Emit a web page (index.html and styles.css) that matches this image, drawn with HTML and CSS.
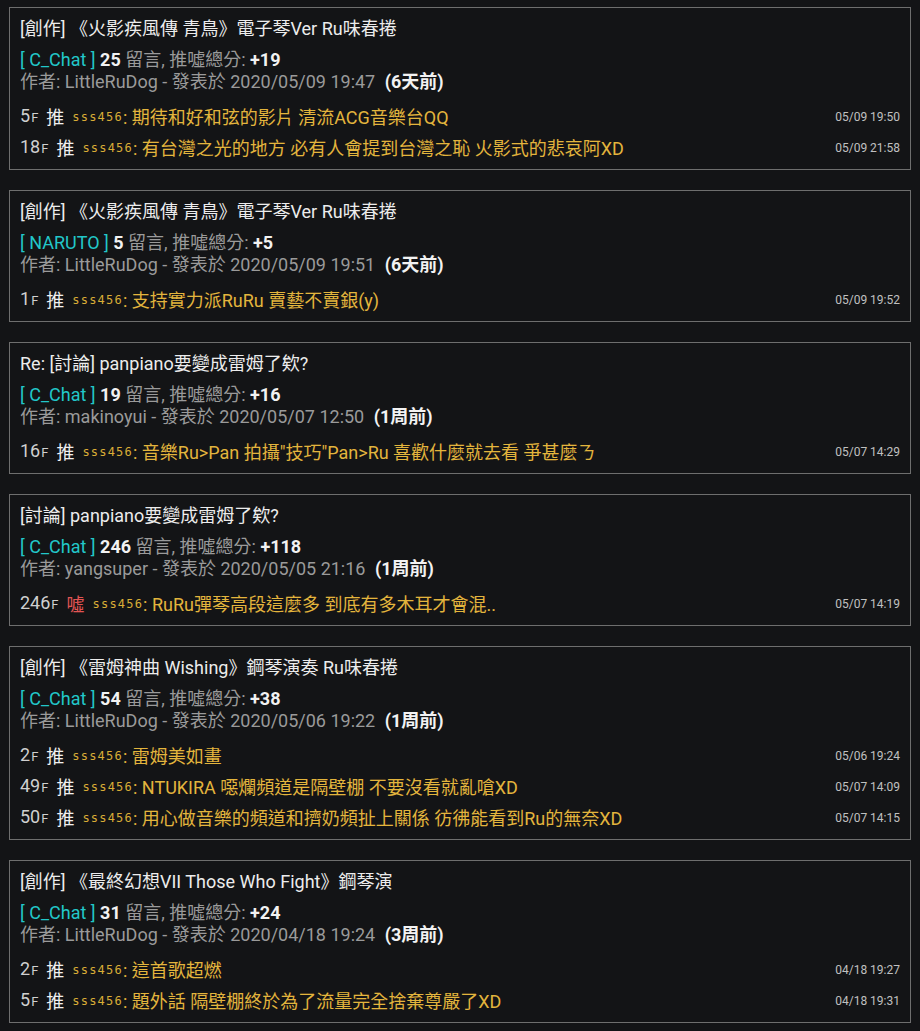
FILE: index.html
```html
<!DOCTYPE html>
<html lang="zh-Hant">
<head>
<meta charset="utf-8">
<title>Posts</title>
<link rel="stylesheet" href="styles.css">
</head>
<body>
<div class="list">

<div class="card">
  <div class="title">[創作] 《火影疾風傳 青鳥》電子琴Ver Ru味春捲</div>
  <div class="meta"><span class="board">[ C_Chat ]</span> <b>25</b> 留言, 推噓總分: <b>+19</b></div>
  <div class="author">作者: LittleRuDog - 發表於 2020/05/09 19:47 <b class="ago">(6天前)</b></div>
  <div class="comments">
    <div class="cmt"><span class="floor">5<small>F</small></span><span class="tag push">推</span><span class="user">sss456</span><span class="text">: 期待和好和弦的影片 清流ACG音樂台QQ</span><span class="time">05/09 19:50</span></div>
    <div class="cmt"><span class="floor">18<small>F</small></span><span class="tag push">推</span><span class="user">sss456</span><span class="text">: 有台灣之光的地方 必有人會提到台灣之恥 火影式的悲哀阿XD</span><span class="time">05/09 21:58</span></div>
  </div>
</div>

<div class="card">
  <div class="title">[創作] 《火影疾風傳 青鳥》電子琴Ver Ru味春捲</div>
  <div class="meta"><span class="board">[ NARUTO ]</span> <b>5</b> 留言, 推噓總分: <b>+5</b></div>
  <div class="author">作者: LittleRuDog - 發表於 2020/05/09 19:51 <b class="ago">(6天前)</b></div>
  <div class="comments">
    <div class="cmt"><span class="floor">1<small>F</small></span><span class="tag push">推</span><span class="user">sss456</span><span class="text">: 支持實力派RuRu 賣藝不賣銀(y)</span><span class="time">05/09 19:52</span></div>
  </div>
</div>

<div class="card">
  <div class="title">Re: [討論] panpiano要變成雷姆了欸?</div>
  <div class="meta"><span class="board">[ C_Chat ]</span> <b>19</b> 留言, 推噓總分: <b>+16</b></div>
  <div class="author">作者: makinoyui - 發表於 2020/05/07 12:50 <b class="ago">(1周前)</b></div>
  <div class="comments">
    <div class="cmt"><span class="floor">16<small>F</small></span><span class="tag push">推</span><span class="user">sss456</span><span class="text">: 音樂Ru&gt;Pan 拍攝"技巧"Pan&gt;Ru 喜歡什麼就去看 爭甚麼ㄋ</span><span class="time">05/07 14:29</span></div>
  </div>
</div>

<div class="card">
  <div class="title">[討論] panpiano要變成雷姆了欸?</div>
  <div class="meta"><span class="board">[ C_Chat ]</span> <b>246</b> 留言, 推噓總分: <b>+118</b></div>
  <div class="author">作者: yangsuper - 發表於 2020/05/05 21:16 <b class="ago">(1周前)</b></div>
  <div class="comments">
    <div class="cmt"><span class="floor">246<small>F</small></span><span class="tag boo">噓</span><span class="user">sss456</span><span class="text">: RuRu彈琴高段這麼多 到底有多木耳才會混..</span><span class="time">05/07 14:19</span></div>
  </div>
</div>

<div class="card">
  <div class="title">[創作] 《雷姆神曲 Wishing》鋼琴演奏 Ru味春捲</div>
  <div class="meta"><span class="board">[ C_Chat ]</span> <b>54</b> 留言, 推噓總分: <b>+38</b></div>
  <div class="author">作者: LittleRuDog - 發表於 2020/05/06 19:22 <b class="ago">(1周前)</b></div>
  <div class="comments">
    <div class="cmt"><span class="floor">2<small>F</small></span><span class="tag push">推</span><span class="user">sss456</span><span class="text">: 雷姆美如畫</span><span class="time">05/06 19:24</span></div>
    <div class="cmt"><span class="floor">49<small>F</small></span><span class="tag push">推</span><span class="user">sss456</span><span class="text">: NTUKIRA 噁爛頻道是隔壁棚 不要沒看就亂嗆XD</span><span class="time">05/07 14:09</span></div>
    <div class="cmt"><span class="floor">50<small>F</small></span><span class="tag push">推</span><span class="user">sss456</span><span class="text">: 用心做音樂的頻道和擠奶頻扯上關係 彷彿能看到Ru的無奈XD</span><span class="time">05/07 14:15</span></div>
  </div>
</div>

<div class="card">
  <div class="title">[創作] 《最終幻想VII Those Who Fight》鋼琴演</div>
  <div class="meta"><span class="board">[ C_Chat ]</span> <b>31</b> 留言, 推噓總分: <b>+24</b></div>
  <div class="author">作者: LittleRuDog - 發表於 2020/04/18 19:24 <b class="ago">(3周前)</b></div>
  <div class="comments">
    <div class="cmt"><span class="floor">2<small>F</small></span><span class="tag push">推</span><span class="user">sss456</span><span class="text">: 這首歌超燃</span><span class="time">04/18 19:27</span></div>
    <div class="cmt"><span class="floor">5<small>F</small></span><span class="tag push">推</span><span class="user">sss456</span><span class="text">: 題外話 隔壁棚終於為了流量完全捨棄尊嚴了XD</span><span class="time">04/18 19:31</span></div>
  </div>
</div>

</div>
</body>
</html>
```

FILE: styles.css
```css
html, body {
  margin: 0;
  padding: 0;
  background: #131416;
}
body {
  font-family: Roboto, "Noto Sans CJK TC", sans-serif;
  color: #e8e8e8;
  font-size: 18px;
}
.list {
  display: flex;
  flex-direction: column;
  gap: 20px;
  padding: 7px 9px;
}
.card {
  border: 1px solid #6e6e6e;
  padding: 8px 10px 7px 10px;
}
.title {
  line-height: 26px;
  color: #ececec;
  white-space: nowrap;
}
.meta {
  margin-top: 7px;
  line-height: 22px;
  color: #9a9a9a;
}
.meta b, .author b {
  color: #f2f2f2;
  font-weight: 700;
}
.board {
  color: #22c7c9;
}
.author {
  line-height: 22px;
  color: #9a9a9a;
}
.author .ago {
  margin-left: 5px;
}
.comments {
  margin-top: 7px;
}
.cmt {
  display: flex;
  align-items: center;
  height: 31px;
  white-space: nowrap;
}
.floor {
  color: #d0d0d0;
  margin-right: 8px;
}
.floor small {
  font-size: 13px;
  margin-left: 1px;
}
.tag {
  margin-right: 8px;
}
.push {
  color: #f0f0f0;
}
.boo {
  color: #e15454;
}
.user {
  font-family: "DejaVu Sans Mono", monospace;
  font-size: 12px;
  color: #d9ad36;
  letter-spacing: 1.2px;
  padding-top: 3px;
}
.text {
  color: #e3b53d;
  flex: 1;
}
.time {
  font-size: 12px;
  color: #c0c0c0;
  padding-top: 3px;
}
```
